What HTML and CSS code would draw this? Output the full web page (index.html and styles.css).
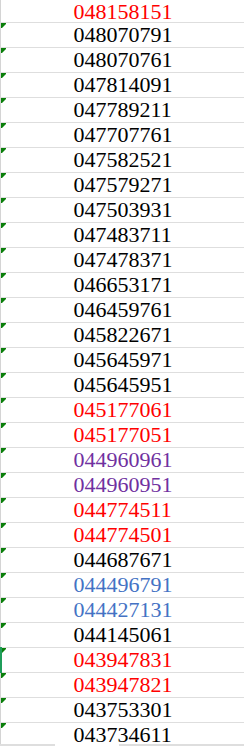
FILE: index.html
```html
<!DOCTYPE html>
<html>
<head>
<meta charset="utf-8">
<link rel="stylesheet" href="styles.css">
</head>
<body>
<div class="sheet">
  <div class="row first"><span class="val red">048158151</span></div>
  <div class="row flag"><span class="val">048070791</span></div>
  <div class="row flag"><span class="val">048070761</span></div>
  <div class="row flag"><span class="val">047814091</span></div>
  <div class="row flag"><span class="val">047789211</span></div>
  <div class="row flag"><span class="val">047707761</span></div>
  <div class="row flag"><span class="val">047582521</span></div>
  <div class="row flag"><span class="val">047579271</span></div>
  <div class="row flag"><span class="val">047503931</span></div>
  <div class="row flag"><span class="val">047483711</span></div>
  <div class="row flag"><span class="val">047478371</span></div>
  <div class="row flag"><span class="val">046653171</span></div>
  <div class="row flag"><span class="val">046459761</span></div>
  <div class="row flag"><span class="val">045822671</span></div>
  <div class="row flag"><span class="val">045645971</span></div>
  <div class="row flag"><span class="val">045645951</span></div>
  <div class="row flag"><span class="val red">045177061</span></div>
  <div class="row flag"><span class="val red">045177051</span></div>
  <div class="row flag"><span class="val purple">044960961</span></div>
  <div class="row flag"><span class="val purple">044960951</span></div>
  <div class="row flag"><span class="val red">044774511</span></div>
  <div class="row flag"><span class="val red">044774501</span></div>
  <div class="row flag"><span class="val">044687671</span></div>
  <div class="row flag"><span class="val blue">044496791</span></div>
  <div class="row flag"><span class="val blue">044427131</span></div>
  <div class="row flag"><span class="val">044145061</span></div>
  <div class="row flag selected"><span class="val red">043947831</span></div>
  <div class="row flag"><span class="val red">043947821</span></div>
  <div class="row flag"><span class="val">043753301</span></div>
  <div class="row flag last"><span class="val">043734611</span></div>
  <div class="bottom">
    <div class="seg seg-a"></div>
    <div class="seg seg-gap"></div>
    <div class="seg seg-b"></div>
  </div>
</div>
</body>
</html>
```
FILE: styles.css
```css
html, body {
  margin: 0;
  padding: 0;
  background: #ffffff;
}
.sheet {
  width: 244px;
  height: 746px;
  overflow: hidden;
  display: flex;
  flex-direction: column;
}
.row {
  position: relative;
  height: 24px;
  flex: 0 0 auto;
  border-bottom: 1px solid #dedede;
  border-left: 1px solid #d4d4d4;
  display: flex;
  justify-content: center;
  font-family: "Liberation Serif", "Times New Roman", serif;
  font-size: 20px;
  line-height: 25px;
  color: #000000;
}
.row.first {
  height: 22px;
}
.row.last {
  height: 21px;
  border-bottom: none;
}
.val {
  display: inline-block;
  transform: scaleX(1.1);
  transform-origin: center;
  white-space: nowrap;
  padding-left: 1px;
}
.red { color: #ff0000; }
.purple { color: #7030a0; }
.blue { color: #4472c4; }
.flag::before {
  content: "";
  position: absolute;
  left: 0;
  top: 0;
  width: 5px;
  height: 5px;
  background: #0a7f0a;
  clip-path: polygon(0 0, 6px 0, 0 6px);
}
.selected::after {
  content: "";
  position: absolute;
  left: -1px;
  top: -1px;
  bottom: -2px;
  width: 2px;
  background: #1f9d5a;
}
.bottom {
  height: 2px;
  display: flex;
  flex: 0 0 auto;
}
.seg-a {
  width: 55px;
  background: #dedede;
}
.seg-gap {
  width: 64px;
}
.seg-b {
  flex: 1;
  background: #dedede;
}
```
